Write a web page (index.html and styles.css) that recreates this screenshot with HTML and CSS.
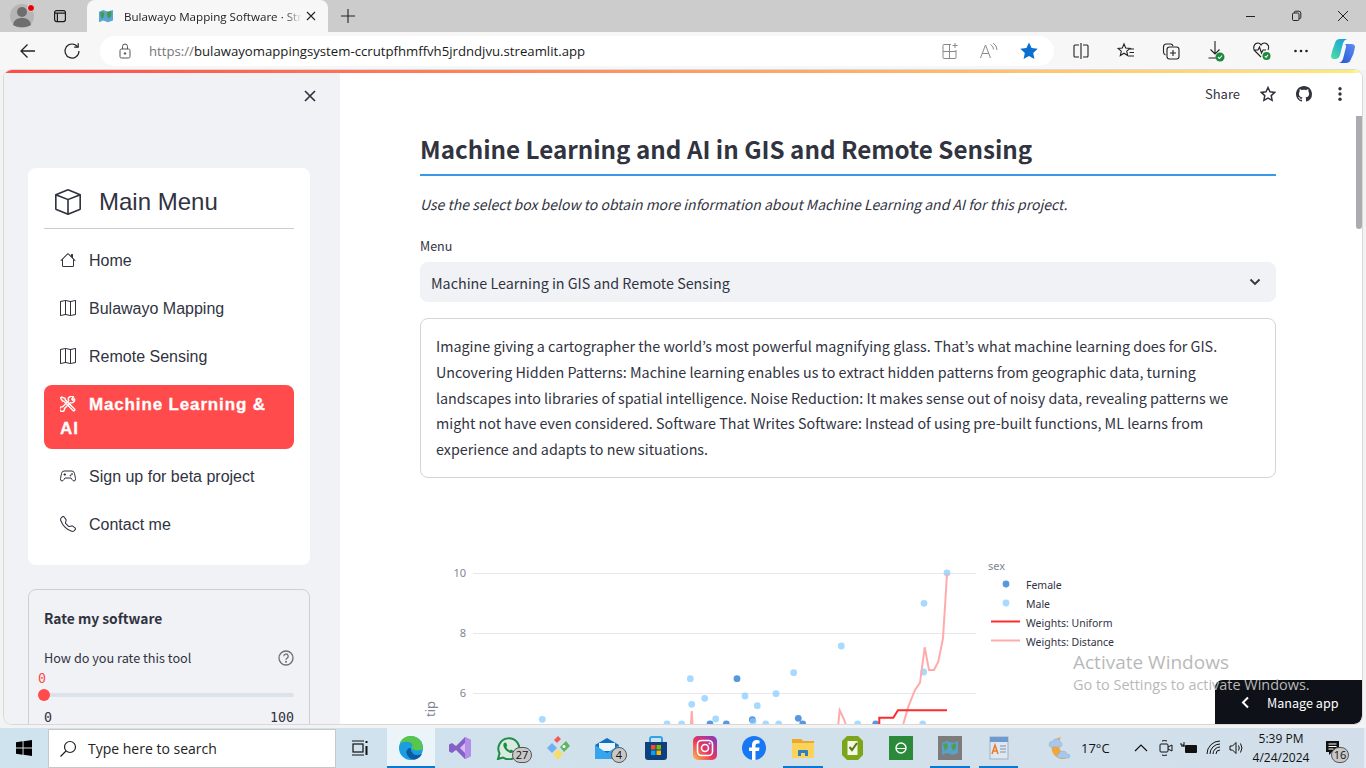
FILE: index.html
```html
<!DOCTYPE html>
<html lang="en">
<head>
<meta charset="utf-8">
<title>Bulawayo Mapping Software</title>
<link rel="stylesheet" href="styles.css">
</head>
<body>
<header class="tabstrip">
  <div class="profile">
    <svg width="30" height="30" viewBox="0 0 30 30"><circle cx="15" cy="15" r="12" fill="#b5b5b5"/><circle cx="15" cy="11" r="5" fill="#6e6e6e"/><path d="M6 24c1-6 5-7 9-7s8 1 9 7c-5 3-13 3-18 0z" fill="#6e6e6e"/><circle cx="24" cy="7" r="3.5" fill="#e00000" stroke="#ddd"/></svg>
  </div>
  <div class="tabctl"><svg width="16" height="16" viewBox="0 0 16 16" fill="none" stroke="#1a1a1a" stroke-width="1.2"><rect x="2.6" y="2.6" width="10.8" height="11" rx="2"/><path d="M2.6 5.2h10.8M5.4 5.2v8.4"/></svg></div>
  <div class="tab">
    <svg class="favicon" width="14" height="14" viewBox="0 0 16 16"><path d="M0 3l5-2 5 2 6-2v12l-6 2-5-2-5 2z" fill="#58a5d6"/><path d="M1.500 4l3-1 1.500 3-1 4-2 1-1-3zM9 3.500l5-1.500v6l-3 3-1.500-3z" fill="#3f9a55"/><path d="M6.500 3.500L9 4.500 8.500 7l-2-1z" fill="#6fae62"/></svg>
    <span class="tabtitle">Bulawayo Mapping Software · Str</span>
    <svg width="12" height="12" viewBox="0 0 12 12" stroke="#222" stroke-width="1.1"><path d="M2 2l8 8M10 2l-8 8"/></svg>
  </div>
  <div class="newtab"><svg width="16" height="16" viewBox="0 0 16 16" stroke="#222" stroke-width="1.1"><path d="M8 1v14M1 8h14"/></svg></div>
  <div class="winctl">
    <span class="wbtn"><svg width="12" height="12" viewBox="0 0 12 12" stroke="#222"><path d="M1 6.5h9"/></svg></span>
    <span class="wbtn"><svg width="12" height="12" viewBox="0 0 12 12" fill="none" stroke="#222"><rect x="1.5" y="3" width="6.5" height="7.5" rx="1.2"/><path d="M3.5 3V2.2q0-1 1-1h3.3q2 0 2 2v4.3q0 1-1 1H8"/></svg></span>
    <span class="wbtn"><svg width="12" height="12" viewBox="0 0 12 12" stroke="#222"><path d="M1 1l10 10M11 1L1 11"/></svg></span>
  </div>
</header>
<nav class="toolbar">
  <span class="tb tb-back"><svg width="18" height="18" viewBox="0 0 18 18" fill="none" stroke="#222" stroke-width="1.3"><path d="M16 9H2M8.500 2.500L2 9l6.500 6.500"/></svg></span>
  <span class="tb tb-reload"><svg width="18" height="18" viewBox="0 0 18 18" fill="none" stroke="#222" stroke-width="1.2"><path d="M14.600 4.800A7 7 0 1 0 16 9"/><path d="M15.200 1.200v4h-4"/></svg></span>
  <div class="address">
    <svg class="lock" width="14" height="16" viewBox="0 0 14 16" fill="none" stroke="#555"><rect x="2" y="6" width="10" height="9" rx="1.5"/><path d="M4.500 6V3.500a2.500 2.500 0 0 1 5 0V6"/><circle cx="7" cy="10.500" r=".8" fill="#555"/></svg>
    <span class="url"><span class="urlscheme">https://</span>bulawayomappingsystem-ccrutpfhmffvh5jrdndjvu.streamlit.app</span>
    <span class="addr-icons">
      <svg width="18" height="18" viewBox="0 0 18 18" fill="none" stroke="#8a8a8a"><path d="M10 2.500H3a1 1 0 0 0-1 1v12a1 1 0 0 0 1 1h11a1 1 0 0 0 1-1V8M2 9.500h13M8.500 3v13M14 1v5M11.500 3.500h5"/></svg>
      <svg width="20" height="18" viewBox="0 0 20 18" fill="none" stroke="#8a8a8a"><path d="M1.500 16L6.500 3l5 13M3.300 11.500h6.400M11.500 2.500q3 1.500 3 5M14 1q4 2.500 4 7"/></svg>
      <svg width="20" height="20" viewBox="0 0 20 20"><path d="M10 1.500l2.600 5.600 6.100.7-4.500 4.200 1.200 6-5.400-3-5.400 3 1.200-6L1.300 7.800l6.100-.7z" fill="#0a6fcf"/></svg>
    </span>
  </div>
  <div class="tb-right">
    <svg width="18" height="18" viewBox="0 0 18 18" fill="none" stroke="#222" stroke-width="1.100"><path d="M9 1v16M7 3H3a1 1 0 0 0-1 1v10a1 1 0 0 0 1 1h4M11 3h4a1 1 0 0 1 1 1v10a1 1 0 0 1-1 1h-4"/></svg>
    <svg width="18" height="18" viewBox="0 0 18 18" fill="none" stroke="#222" stroke-width="1.100"><path d="M7 2l1.700 4 4.300.4-3.300 2.800 1 4.300L7 11.200l-3.700 2.300 1-4.300L1 6.400l4.300-.4zM13 7h4M12.500 10.500h4.500M11.500 14h5.500"/></svg>
    <svg width="18" height="18" viewBox="0 0 18 18" fill="none" stroke="#222" stroke-width="1.100"><rect x="5" y="5" width="12" height="12" rx="2.500"/><path d="M11 8v6M8 11h6M3.500 13Q1.500 12 1.500 10V5q0-3 3-3h4q2 0 2.500 2"/></svg>
    <span class="ext"><svg width="18" height="22" viewBox="0 0 18 22" fill="none" stroke="#222" stroke-width="1.100"><path d="M8 1v13M3.500 9.500L8 14l4.500-4.500M1.500 18H9"/><circle cx="13" cy="17" r="4.500" fill="#1c8a3c" stroke="none"/><path d="M11 17l1.500 1.500 2.500-3" stroke="#fff"/></svg></span>
    <span class="ext"><svg width="20" height="20" viewBox="0 0 20 20" fill="none" stroke="#222" stroke-width="1.100"><path d="M9 16L3 10Q1 8 2 5t4-3q2 0 3 2 1-2 3.500-2t4 3q.5 2-.5 4M1.500 9H6l1.500-3 2 6 1.500-3h3"/><circle cx="14.500" cy="15" r="4" fill="#1c8a3c" stroke="none"/><path d="M12.800 15l1.200 1.300 2-2.500" stroke="#fff"/></svg></span>
    <svg class="dots" width="18" height="18" viewBox="0 0 18 18" fill="#222"><circle cx="3.500" cy="9" r="1.300"/><circle cx="9" cy="9" r="1.300"/><circle cx="14.500" cy="9" r="1.300"/></svg>
    <svg class="copilot" width="24" height="24" viewBox="0 0 24 24"><defs><linearGradient id="cpa" x1="0" y1="1" x2="1" y2="0"><stop offset="0" stop-color="#4fe0a0"/><stop offset="1" stop-color="#0f9be0"/></linearGradient><linearGradient id="cpb" x1="0" y1="1" x2="1" y2="0"><stop offset="0" stop-color="#1f58d8"/><stop offset="1" stop-color="#5f8cf0"/></linearGradient></defs><path d="M9 0h7q-3 1-4 4L9 16q-1 4-5 4H3q-3 0-3-3q1-6 4-13q1-4 5-4z" fill="url(#cpa)"/><path d="M14 5h6q4 0 4 3-1 7-4 12-1 4-5 4H8q3-1 4-4l3-12q.5-2-1-3z" fill="url(#cpb)"/></svg>
  </div>
</nav>
<div class="frame">
  <div class="decoration"></div>
  <div class="app">
    <aside class="sidebar">
      <div class="side-top"><svg width="14" height="14" viewBox="0 0 14 14" stroke="#31333f" stroke-width="1.700"><path d="M2 2l10 10M12 2L2 12"/></svg></div>
      <div class="menucard">
        <div class="menutitle">
          <svg width="26" height="26" viewBox="0 0 16 16" fill="#31333f"><path d="M8.186 1.113a.5.5 0 0 0-.372 0L1.846 3.5 8 5.961 14.154 3.5 8.186 1.113zM15 4.239l-6.500 2.600v7.922l6.500-2.600V4.240zM7.500 14.762V6.838L1 4.239v7.925l6.500 2.600zM7.443.184a1.500 1.500 0 0 1 1.114 0l7.129 2.852A.5.5 0 0 1 16 3.500v8.662a1 1 0 0 1-.629.928l-7.185 2.874a.5.5 0 0 1-.372 0L.63 13.090a1 1 0 0 1-.63-.928V3.500a.5.500 0 0 1 .314-.464L7.443.184z"/></svg>
          <span>Main Menu</span>
        </div>
        <ul class="menulist">
          <li class="menuitem"><svg width="16" height="16" viewBox="0 0 16 16" fill="#31333f"><path d="M8.707 1.500a1 1 0 0 0-1.414 0L.646 8.146a.5.5 0 0 0 .708.708L2 8.207V13.500A1.500 1.500 0 0 0 3.500 15h9a1.500 1.500 0 0 0 1.500-1.500V8.207l.646.647a.5.5 0 0 0 .708-.708L13 5.793V2.500a.5.5 0 0 0-.5-.5h-1a.5.5 0 0 0-.5.500v1.293L8.707 1.500ZM13 7.207V13.500a.5.500 0 0 1-.5.500h-9a.5.500 0 0 1-.5-.5V7.207l5-5 5 5Z"/></svg><span>Home</span></li>
          <li class="menuitem"><svg width="16" height="16" viewBox="0 0 16 16" fill="#31333f"><path d="M15.817.113A.5.5 0 0 1 16 .5v14a.5.5 0 0 1-.402.49l-5 1a.502.502 0 0 1-.196 0L5.500 15.010l-4.902.98A.5.5 0 0 1 0 15.500v-14a.5.500 0 0 1 .402-.49l5-1a.5.500 0 0 1 .196 0L10.500.99l4.902-.98a.5.500 0 0 1 .415.103zM10 1.910l-4-.8v12.980l4 .8V1.910zm1 12.980 4-.8V1.110l-4 .8v12.980zm-6-.8V1.110l-4 .8v12.980l4-.8z"/></svg><span>Bulawayo Mapping</span></li>
          <li class="menuitem"><svg width="16" height="16" viewBox="0 0 16 16" fill="#31333f"><path d="M15.817.113A.5.5 0 0 1 16 .5v14a.5.5 0 0 1-.402.49l-5 1a.502.502 0 0 1-.196 0L5.500 15.010l-4.902.98A.5.5 0 0 1 0 15.500v-14a.5.500 0 0 1 .402-.49l5-1a.5.500 0 0 1 .196 0L10.500.99l4.902-.98a.5.500 0 0 1 .415.103zM10 1.910l-4-.8v12.980l4 .8V1.910zm1 12.980 4-.8V1.110l-4 .8v12.980zm-6-.8V1.110l-4 .8v12.980l4-.8z"/></svg><span>Remote Sensing</span></li>
          <li class="menuitem active"><svg width="16" height="16" viewBox="0 0 16 16" fill="none" stroke="#fff" stroke-width="1.400"><path d="M1.500 1l-1 1 2 3 1.500.3 9 9.200a1 1 0 0 0 1.500-1.500L5.300 3.800 5 2.300z"/><path d="M13.500 1.200L11.800 3l.9 1.200L14.500 3a3 3 0 0 1-4 3.600L4.500 12.500a2.400 2.400 0 1 1-1.800-1.800l6-6a3 3 0 0 1 4.800-3.500z"/></svg><span>Machine Learning &amp; AI</span></li>
          <li class="menuitem"><svg width="16" height="16" viewBox="0 0 16 16" fill="none" stroke="#31333f"><path d="M4 3h8q2 0 2.500 2.500l1 5q.3 2.500-1.500 2.500-1 0-2-1.500L11 10H5l-1 1.500Q3 13 2 13 .2 13 .5 10.500l1-5Q2 3 4 3z"/><path d="M3.500 6.500h2.500M4.800 5.300v2.500"/><circle cx="10.500" cy="7.500" r=".5"/><circle cx="12" cy="6" r=".5"/></svg><span>Sign up for beta project</span></li>
          <li class="menuitem"><svg width="16" height="16" viewBox="0 0 16 16" fill="#31333f"><path d="M3.654 1.328a.678.678 0 0 0-1.015-.063L1.605 2.300c-.483.484-.661 1.169-.45 1.770a17.568 17.568 0 0 0 4.168 6.608 17.569 17.569 0 0 0 6.608 4.168c.601.211 1.286.033 1.770-.45l1.034-1.034a.678.678 0 0 0-.063-1.015l-2.307-1.794a.678.678 0 0 0-.58-.122l-2.190.547a1.745 1.745 0 0 1-1.657-.459L5.482 8.062a1.745 1.745 0 0 1-.46-1.657l.548-2.190a.678.678 0 0 0-.122-.58L3.654 1.328zM1.884.511a1.745 1.745 0 0 1 2.612.163L6.290 2.980c.329.423.445.974.315 1.494l-.547 2.190a.678.678 0 0 0 .178.643l2.457 2.457a.678.678 0 0 0 .644.178l2.189-.547a1.745 1.745 0 0 1 1.494.315l2.306 1.794c.829.645.905 1.870.163 2.611l-1.034 1.034c-.74.74-1.846 1.065-2.877.702a18.634 18.634 0 0 1-7.010-4.420 18.634 18.634 0 0 1-4.420-7.009c-.362-1.030-.037-2.137.703-2.877L1.885.511z"/></svg><span>Contact me</span></li>
        </ul>
      </div>
      <section class="ratepanel">
        <h3 class="ratetitle">Rate my software</h3>
        <div class="ratelabel"><span>How do you rate this tool</span><svg width="16" height="16" viewBox="0 0 16 16" fill="none" stroke="#6d6f78" stroke-width="1.300"><circle cx="8" cy="8" r="7"/><path d="M5.800 6.200a2.200 2.200 0 1 1 3.300 1.900Q8 8.700 8 9.800"/><circle cx="8" cy="11.800" r=".4"/></svg></div>
        <div class="sliderval">0</div>
        <div class="track"><span class="thumb"></span></div>
        <div class="sliderends"><span>0</span><span>100</span></div>
      </section>
    </aside>
    <main class="main">
      <div class="mainhead">
        <span class="share">Share</span>
        <svg width="16" height="16" viewBox="0 0 16 16" fill="none" stroke="#31333f" stroke-width="1.500"><path d="M8 1.500l2 4.300 4.700.6-3.500 3.200.9 4.700L8 12l-4.100 2.300.9-4.700L1.300 6.400 6 5.800z"/></svg>
        <svg width="16" height="16" viewBox="0 0 16 16" fill="#31333f"><path d="M8 0C3.580 0 0 3.580 0 8c0 3.540 2.290 6.530 5.470 7.590.4.070.55-.17.55-.38 0-.19-.01-.82-.01-1.490-2.010.37-2.530-.49-2.690-.94-.09-.23-.48-.94-.82-1.130-.28-.15-.68-.52-.01-.53.63-.01 1.080.58 1.230.82.72 1.210 1.870.87 2.330.66.07-.52.28-.87.51-1.070-1.780-.2-3.640-.89-3.640-3.950 0-.87.31-1.590.82-2.150-.08-.2-.36-1.020.08-2.120 0 0 .67-.21 2.200.82.64-.18 1.320-.27 2-.27.68 0 1.360.09 2 .27 1.530-1.040 2.200-.82 2.200-.82.44 1.100.16 1.920.08 2.120.51.56.82 1.270.82 2.150 0 3.070-1.870 3.750-3.650 3.950.29.25.54.73.54 1.480 0 1.070-.01 1.930-.01 2.200 0 .21.15.46.55.38A8.013 8.013 0 0 0 16 8c0-4.420-3.580-8-8-8z"/></svg>
        <svg width="16" height="16" viewBox="0 0 16 16" fill="#31333f"><circle cx="8" cy="2.800" r="1.700"/><circle cx="8" cy="8" r="1.700"/><circle cx="8" cy="13.200" r="1.700"/></svg>
      </div>
      <div class="content">
        <h1 class="pagetitle">Machine Learning and AI in GIS and Remote Sensing</h1>
        <p class="lead">Use the select box below to obtain more information about Machine Learning and AI for this project.</p>
        <label class="fieldlabel">Menu</label>
        <div class="select"><span>Machine Learning in GIS and Remote Sensing</span><svg width="12" height="8" viewBox="0 0 12 8" fill="none" stroke="#31333f" stroke-width="1.800"><path d="M1.500 1.500L6 6l4.500-4.500"/></svg></div>
        <div class="textbox">Imagine giving a cartographer the world’s most powerful magnifying glass. That’s what machine learning does for GIS. Uncovering Hidden Patterns: Machine learning enables us to extract hidden patterns from geographic data, turning landscapes into libraries of spatial intelligence. Noise Reduction: It makes sense out of noisy data, revealing patterns we might not have even considered. Software That Writes Software: Instead of using pre-built functions, ML learns from experience and adapts to new situations.</div>
        <svg class="chart" width="700" height="174" viewBox="420 550 700 174">
          <g stroke="#e6e8ee" stroke-width="1"><path d="M473 573.500H976M473 633.500H976M473 693.500H976"/></g>
          <g class="ticks"><text x="466" y="577">10</text><text x="466" y="637">8</text><text x="466" y="697">6</text></g>
          <text class="axis" transform="translate(435 717) rotate(-90)">tip</text>
          <g fill="#1f77d0" fill-opacity=".75">
            <circle cx="710" cy="724" r="3.400"/><circle cx="726.300" cy="724" r="3.400"/><circle cx="737" cy="678.700" r="3.400"/><circle cx="752.300" cy="719.700" r="3.400"/><circle cx="798.300" cy="718.300" r="3.400"/><circle cx="802.700" cy="724" r="3.400"/><circle cx="875.700" cy="724" r="3.400"/>
          </g>
          <g fill="#83c9ff" fill-opacity=".7">
            <circle cx="542.300" cy="719.300" r="3.400"/><circle cx="667" cy="724" r="3.400"/><circle cx="681.700" cy="724" r="3.400"/><circle cx="690.300" cy="678.700" r="3.400"/><circle cx="691.700" cy="704.300" r="3.400"/><circle cx="704.700" cy="698.300" r="3.400"/><circle cx="715.700" cy="719" r="3.400"/><circle cx="745" cy="696" r="3.400"/><circle cx="757.300" cy="705.700" r="3.400"/><circle cx="776" cy="693.700" r="3.400"/><circle cx="793.700" cy="672.700" r="3.400"/><circle cx="841.300" cy="646" r="3.400"/><circle cx="924" cy="603.300" r="3.400"/><circle cx="947" cy="573" r="3.400"/><circle cx="923.700" cy="672" r="3.400"/><circle cx="753" cy="721.300" r="3.400"/><circle cx="765.700" cy="724" r="3.400"/><circle cx="778.700" cy="724" r="3.400"/><circle cx="857.700" cy="724" r="3.400"/><circle cx="922.700" cy="724" r="3.400"/>
          </g>
          <g fill="none" stroke="#ffabab" stroke-width="2">
            <path d="M691 724L691.700 711L692.500 724"/>
            <path d="M838.300 724L839.700 710.300L843.300 717.700L845.700 724"/>
            <path d="M903.300 724L908.300 706.700L915 690L920 682.700L924.700 647.300L929 670L934 670L938.300 661.700L943 638.300L947 574"/>
          </g>
          <path d="M879.300 724V717.700H893.300L898 710.300H947" fill="none" stroke="#ff2b2b" stroke-width="2"/>
          <text class="legendtitle" x="988" y="570">sex</text>
          <circle cx="1006" cy="584" r="3.400" fill="#1f77d0" fill-opacity=".75"/><text class="legend" x="1026" y="589">Female</text>
          <circle cx="1006" cy="603" r="3.400" fill="#83c9ff" fill-opacity=".7"/><text class="legend" x="1026" y="608">Male</text>
          <path d="M991 621.500h29" stroke="#ff2b2b" stroke-width="2"/><text class="legend" x="1026" y="627">Weights: Uniform</text>
          <path d="M991 640.500h29" stroke="#ffabab" stroke-width="2"/><text class="legend" x="1026" y="646">Weights: Distance</text>
        </svg>
      </div>
      <div class="scrollthumb"></div>
      <div class="manage"><svg width="9" height="13" viewBox="0 0 9 13" fill="none" stroke="#fff" stroke-width="2"><path d="M7 1.500L2 6.500l5 5"/></svg><span>Manage app</span></div>
      <div class="activate"><div class="act1">Activate Windows</div><div class="act2">Go to Settings to activate Windows.</div></div>
    </main>
  </div>
</div>
<footer class="taskbar">
  <span class="startbtn"><svg width="16" height="16" viewBox="0 0 17 17" fill="#000"><path d="M0 2.400l7-1v6.600H0zM8 1.300L17 0v8H8zM0 9h7v6.600l-7-1zM8 9h9v8l-9-1.300z"/></svg></span>
  <div class="search"><svg width="18" height="18" viewBox="0 0 18 18" fill="none" stroke="#222" stroke-width="1.200"><circle cx="11" cy="7" r="5.500"/><path d="M7 11l-5.500 5.500"/></svg><span>Type here to search</span></div>
  <span class="tk w-task"><svg width="18" height="18" viewBox="0 0 18 18" fill="none" stroke="#111" stroke-width="1.200"><rect x="2" y="5" width="10" height="8"/><path d="M1 2h12M1 16h12"/><path d="M15.500 2v2M15.500 7v9" stroke-width="2"/></svg></span>
  <span class="tk w-edge"><svg width="24" height="24" viewBox="0 0 24 24"><circle cx="12" cy="12" r="12" fill="#1b9de2"/><path d="M24 13C24 5 18 0 12 0 6 0 2 3 1 8c3-3 10-3 12 0 1 2 0 3-1 4 3 3 9 3 12 1z" fill="#56c74a"/><path d="M12 12c-3 0-5 2-4.500 5 .5 3 4 7 8.500 6.500 3-.5 6-3 7-6-3 2-7 2-9 0-1.500-1.500-2.500-3-2-5.500z" fill="#0c59a4"/></svg></span>
  <span class="tk w-vs"><svg width="24" height="24" viewBox="0 0 24 24"><path d="M17 1l6 3v16l-6 3-9-9-4 3-3-1.500V8.500L4 7l4 3z" fill="#8661c5"/><path d="M17 7l-5 5 5 5z" fill="#c4a8ee"/><path d="M17 1l6 3v16l-6 3z" fill="#b48ee8"/><path d="M17 7v10l-5-5z" fill="#fff" fill-opacity=".25"/></svg></span>
  <span class="tk w-wa"><svg width="24" height="24" viewBox="0 0 24 24" fill="none"><path d="M2 23l1.500-5.500A10.500 10.500 0 1 1 7 21.500z" stroke="#1e8a44" stroke-width="2" fill="#d6ece0"/><path d="M8 7q-1.500 2 .5 5.500t6.500 4.500q2 0 2.500-2l-2.500-1.500-1.200 1q-2.500-1-3.500-3.500l1-1.200L10 6.500z" fill="#1e8a44"/></svg><b class="badge badge-wide">27</b></span>
  <span class="tk w-git"><svg width="24" height="24" viewBox="0 0 24 24"><path d="M1 12l5-5 5 5-5 5z" fill="#6fb0f5"/><path d="M8 4l4-4 3 3-4 4z" fill="#ef5a5a"/><path d="M14 11l6-6 4 5-6 6z" fill="#5fb65f"/><path d="M7 18l5-5 5 5-5 6z" fill="#f5dd6a"/><circle cx="18" cy="10.500" r="1.500" fill="#fff"/></svg></span>
  <span class="tk w-mail"><svg width="24" height="22" viewBox="0 0 24 22"><path d="M0 8l12-7 12 7v14H0z" fill="#0f6fc0"/><path d="M4 6h16v8H4z" fill="#eaf5fd"/><path d="M0 8l12 8 12-8v14H0z" fill="#37a5ee"/></svg><b class="badge">4</b></span>
  <span class="tk w-store"><svg width="24" height="24" viewBox="0 0 24 24"><path d="M1 6h22v15q0 3-3 3H4q-3 0-3-3z" fill="#0e3f7e"/><path d="M6 6V3q0-2 2-2h8q2 0 2 2v3" fill="none" stroke="#2ea3e8" stroke-width="2"/><rect x="7" y="9" width="4.500" height="4.500" fill="#f25022"/><rect x="12.500" y="9" width="4.500" height="4.500" fill="#7fba00"/><rect x="7" y="14.500" width="4.500" height="4.500" fill="#00a4ef"/><rect x="12.500" y="14.500" width="4.500" height="4.500" fill="#ffb900"/></svg></span>
  <span class="tk w-ig"><svg width="24" height="24" viewBox="0 0 24 24"><defs><linearGradient id="ig" x1="0" y1="1" x2="1" y2="0"><stop offset="0" stop-color="#fdc04f"/><stop offset=".45" stop-color="#e8365d"/><stop offset="1" stop-color="#7f3ac7"/></linearGradient></defs><rect width="24" height="24" rx="5" fill="url(#ig)"/><rect x="4.500" y="4.500" width="15" height="15" rx="4" fill="none" stroke="#fff" stroke-width="1.600"/><circle cx="12" cy="12" r="3.500" fill="none" stroke="#fff" stroke-width="1.600"/><circle cx="16.500" cy="7.500" r="1" fill="#fff"/></svg></span>
  <span class="tk w-fb"><svg width="24" height="24" viewBox="0 0 24 24"><circle cx="12" cy="12" r="12" fill="#1877f2"/><path d="M13.500 24v-9H17l.5-3.500h-4V9.500q0-2 2-2h2V4.500Q16 4 15 4q-5 0-5 5v2.500H7V15h3v9z" fill="#fff"/></svg></span>
  <span class="tk w-files"><svg width="22" height="20" viewBox="0 0 22 20"><path d="M0 1h9l2 2h11v16H0z" fill="#e8a92c"/><path d="M0 5h22v15H0z" fill="#fbd35a"/><path d="M6 18v-5q0-1 1-1h8q1 0 1 1v5h-3v-3H9v3z" fill="#2f7fc4"/></svg></span>
  <span class="tk w-note"><svg width="21" height="24" viewBox="0 0 21 24"><path d="M5 0h11l5 5v14l-5 5H5l-5-5V5z" fill="#7ca51a"/><rect x="5.500" y="5" width="10" height="14" fill="#f3f7e6"/><path d="M7.500 11l2.500 3 5-7" fill="none" stroke="#58790f" stroke-width="2"/></svg></span>
  <span class="tk w-green"><svg width="24" height="24" viewBox="0 0 24 24"><rect width="24" height="24" fill="#2a8a3a"/><circle cx="12" cy="12" r="5" fill="none" stroke="#fff" stroke-width="1.400"/><path d="M7 12.500h10" stroke="#fff"/></svg></span>
  <span class="tk w-map"><svg width="24" height="24" viewBox="0 0 24 24"><rect width="24" height="24" fill="#7c7c7c"/><path d="M4 7l5-2 6 2 5-2v12l-5 2-6-2-5 2z" fill="#5aa0c8"/><path d="M5 8l4-1 1 4-3 4zM13 9l5-2v5l-3 3z" fill="#4f9e52"/></svg></span>
  <span class="tk w-word"><svg width="20" height="24" viewBox="0 0 20 24"><rect x="1" y="1" width="18" height="22" fill="#dfe8f2" stroke="#9fb0c2"/><rect x="1" y="1" width="18" height="5" fill="#6d9bd0"/><path d="M3 18l3-9 3 9M4 15h4" fill="none" stroke="#e8792b" stroke-width="1.500"/><path d="M11 10h6M11 13h6M11 16h6" stroke="#7d92a8"/></svg></span>
  <span class="tk w-weather"><svg width="28" height="28" viewBox="0 0 28 28"><path d="M15 3a11 11 0 1 0 9 19A12 12 0 0 1 15 3z" fill="#f1a63b"/><path d="M3 11q0-4 4-4 1-3 4-2 3 0 3 3 2 0 2 2.500T13 13H5q-2 0-2-2zM13 24q-2 0-2-2t2-2q0-3 4-3 3 0 4 3 3 0 3 2t-2 2z" fill="#a9c7e8" stroke="#8aacd3" stroke-width=".5"/></svg></span>
  <span class="temp">17°C</span>
  <span class="tk w-chev"><svg width="14" height="10" viewBox="0 0 14 10" fill="none" stroke="#111" stroke-width="1.200"><path d="M1 8l6-6 6 6"/></svg></span>
  <span class="tk w-cam"><svg width="16" height="18" viewBox="0 0 16 18" fill="none" stroke="#111"><rect x="2" y="5" width="8" height="8" rx="1"/><path d="M10 8l4-2v6l-4-2M4 2q2-1 5 0M4 16q2 1 5 0"/></svg></span>
  <span class="tk w-bat"><svg width="18" height="14" viewBox="0 0 18 14" fill="#111"><rect x="5" y="4" width="12" height="8" rx="1"/><path d="M1 2v2h3v1H1M4 1v5" stroke="#111" fill="none"/></svg></span>
  <span class="tk w-wifi"><svg width="16" height="16" viewBox="0 0 16 16" fill="none" stroke="#111"><path d="M1 14A13 13 0 0 1 14 1M4 14A10 10 0 0 1 14 4M7 14a7 7 0 0 1 7-7M10 14a4 4 0 0 1 4-4"/></svg></span>
  <span class="tk w-vol"><svg width="16" height="16" viewBox="0 0 16 16" fill="none" stroke="#111"><path d="M1 6h2.500L7 2.500v11L3.500 10H1zM9.500 5.500q1.500 2.500 0 5M11.500 3.500q3 4.500 0 9"/></svg></span>
  <div class="clock"><span>5:39 PM</span><span>4/24/2024</span></div>
  <span class="tk w-notif"><svg width="16" height="16" viewBox="0 0 16 16" fill="#111"><path d="M1 1h13v11H7l-3 3v-3H1z"/><path d="M3.500 4h8M3.500 6.500h8M3.500 9h5" stroke="#fff"/></svg><b class="badge badge-mid">16</b></span>
</footer>
</body>
</html>
```
FILE: styles.css
```css
* { box-sizing: border-box; }
html, body { margin: 0; padding: 0; }
body {
  width: 1366px; height: 768px; overflow: hidden;
  display: flex; flex-direction: column;
  font-family: "Noto Sans", sans-serif;
  background: #f3f3f3; color: #31333f;
}
svg { display: block; flex: none; }

/* browser chrome */
.tabstrip { height: 32px; flex: none; background: #cccccc; display: flex; align-items: flex-end; }
.profile { width: 30px; height: 32px; margin-left: 7px; display: flex; align-items: center; }
.tabctl { width: 16px; height: 32px; margin-left: 15px; display: flex; align-items: center; }
.tab {
  width: 241px; height: 32px; margin-left: 19px; padding: 0 12px;
  background: #f7f7f7; border-radius: 8px 8px 0 0;
  display: flex; align-items: center; gap: 11px;
  font: 11.600px "Open Sans", sans-serif; color: #222;
}
.tabtitle { flex: 1; white-space: nowrap; -webkit-mask-image: linear-gradient(to right, #000 90%, transparent); mask-image: linear-gradient(to right, #000 90%, transparent); }
.tab svg:last-child { margin-left: -8px; }
.newtab { height: 32px; margin-left: 12px; display: flex; align-items: center; }
.winctl { margin-left: auto; height: 32px; display: flex; align-items: center; }
.wbtn { width: 46px; display: flex; justify-content: center; }

.toolbar { height: 38px; flex: none; background: #f7f7f7; display: flex; align-items: center; }
.tb { display: flex; }
.tb-back { margin-left: 19px; }
.tb-reload { margin-left: 26px; }
.address {
  width: 954px; height: 30px; margin-left: 19px; padding: 0 15px 0 18px;
  background: #fff; border-radius: 15px;
  display: flex; align-items: center;
}
.url { margin-left: 17px; font: 13.180px "Open Sans", sans-serif; color: #1a1a1a; white-space: nowrap; }
.urlscheme { color: #767676; }
.addr-icons { margin-left: auto; display: flex; align-items: center; gap: 20px; }
.tb-right { margin-left: 18px; display: flex; align-items: center; gap: 27px; }
.ext { display: flex; }
.dots { margin-left: -7px; }
.copilot { margin-left: -6px; }

.frame { height: 654px; flex: none; margin: 0 4px; display: flex; flex-direction: column; border-radius: 8px; overflow: hidden; background: #fff; box-shadow: 0 0 0 1px #d9d9d9; }
.decoration { height: 3px; flex: none; background: linear-gradient(to right, #ff4b4b, #ffe97a 99%, #fdfd96); }
.app { flex: 1; min-height: 0; display: flex; }

/* sidebar */
.sidebar { width: 336px; flex: none; background: #f0f2f6; padding: 0 30px 0 24px; overflow: hidden; }
.side-top { height: 95px; padding-top: 16px; display: flex; justify-content: flex-end; margin-right: -7px; }
.menucard { width: 282px; height: 397px; background: #fff; border-radius: 8px; padding: 16px; font-family: "Liberation Sans", Arial, sans-serif; }
.menutitle { height: 44px; padding: 0 0 8px 11px; display: flex; align-items: center; gap: 18px; font-size: 24px; color: #31333f; }
.menulist { list-style: none; margin: 0; padding: 12px 0 0; border-top: 1px solid #c9ccd2; display: flex; flex-direction: column; gap: 8px; }
.menuitem { min-height: 40px; padding: 8px 16px; border-radius: 8px; font-size: 16px; line-height: 24px; color: #31333f; }
.menuitem svg { display: inline-block; vertical-align: -2px; margin-right: 13px; }
.menuitem.active { background: #ff4b4b; color: #fff; font-size: 17px; font-weight: 700; letter-spacing: .85px; -webkit-text-stroke: .3px #fff; }

.ratepanel { width: 282px; height: 200px; margin-top: 24px; border: 1px solid #cdcfd5; border-radius: 8px; padding: 16px 15px; font-family: "Noto Sans CJK KR", "Noto Sans", sans-serif; }
.ratetitle { margin: 0; font-size: 13.800px; line-height: 24px; font-weight: 700; color: #31333f; }
.ratelabel { margin-top: 16px; display: flex; align-items: center; justify-content: space-between; font-size: 12.700px; line-height: 24px; color: #31333f; }
.sliderval { margin: 1px 0 0 -6px; font: 13.300px/16px "DejaVu Sans Mono", monospace; color: #ff4b4b; height: 16px; }
.track { height: 4px; margin-top: 6px; background: #dde2ea; border-radius: 2px; position: relative; }
.thumb { position: absolute; left: -6px; top: -4px; width: 12px; height: 12px; border-radius: 50%; background: #ff4b4b; }
.sliderends { margin-top: 12px; display: flex; justify-content: space-between; font: 13.300px/18px "DejaVu Sans Mono", monospace; color: #31333f; }

/* main */
.main { flex: 1; min-width: 0; background: #fff; position: relative; overflow: hidden; }
.mainhead { height: 42px; display: flex; align-items: center; justify-content: flex-end; gap: 20px; padding-right: 14px; }
.share { font: 13px/18px "Noto Sans CJK KR", sans-serif; padding-bottom: 1px; }
.content { padding: 16px 86px 0 80px; font-family: "Noto Sans CJK KR", "Noto Sans", sans-serif; }
.pagetitle { margin: 0; font-size: 24.200px; font-weight: 700; line-height: 36px; padding-bottom: 7px; border-bottom: 2px solid #3d97e8; color: #31333f; }
.lead { margin: 16px 0 0; font-style: italic; font-size: 14px; line-height: 25px; }
.fieldlabel { display: block; margin-top: 19px; font-size: 12.500px; line-height: 20px; }
.select { margin-top: 6px; height: 40px; padding: 0 15px 0 11px; background: #f0f2f6; border-radius: 8px; display: flex; align-items: center; justify-content: space-between; font-size: 14.300px; }
.textbox { margin-top: 16px; height: 160px; padding: 14px 15px; border: 1px solid #d3d5da; border-radius: 8px; font-size: 14.320px; line-height: 25.800px; }
.chart { margin: 72px 0 0 0; }
.ticks text { font: 11px "Noto Sans", sans-serif; fill: #7f8597; text-anchor: end; }
.axis { font: 13px "Noto Sans", sans-serif; fill: #7f8597; }
.legendtitle { font: 11px "Noto Sans", sans-serif; fill: #7f8597; }
.legend { font: 10.500px "Noto Sans", sans-serif; fill: #31333f; }
.scrollthumb { position: absolute; right: 0; top: 43px; width: 6px; height: 113px; border-radius: 0 0 3px 3px; background: #acacb0; }
.manage { position: absolute; right: 0; bottom: 0; width: 147px; height: 44px; background: #0e1117; border-radius: 8px 0 8px 0; display: flex; align-items: center; padding-left: 26px; gap: 17px; color: #fff; font: 12.600px "Noto Sans CJK KR", sans-serif; }
.activate { position: absolute; left: 733px; top: 576px; color: #b9b9b9; font-family: "Open Sans", sans-serif; pointer-events: none; }
.act1 { font-size: 19px; line-height: 26px; }
.act2 { font-size: 14.450px; line-height: 20px; }

/* taskbar */
.taskbar { height: 40px; flex: none; margin-top: 4px; background: linear-gradient(to right, #cfe3ee, #d2dfea); display: flex; align-items: center; font-family: "Open Sans", sans-serif; color: #111; border-right: 2px solid #e4ebf2; }
.startbtn { width: 48px; padding-left: 16px; flex: none; }
.search { width: 288px; height: 39px; margin-top: 1px; background: #fff; border: 1px solid #c8c8c8; display: flex; align-items: center; gap: 11px; padding-left: 10px; font-size: 14px; color: #222; }
.tk { flex: none; height: 40px; display: flex; align-items: center; justify-content: center; position: relative; }
.badge { position: absolute; right: -8px; bottom: 5px; width: 16px; height: 16px; border-radius: 8px; background: #c8c8c8; border: 1px solid #555; font: 400 11px/14px "Open Sans", sans-serif; color: #111; text-align: center; }
.badge-wide { right: -12px; width: 20px; }
.badge-mid { width: 18px; }
.w-task { width: 48px; }
.w-edge { width: 48px; margin-left: 3px; background: #ebf4f8; box-shadow: inset 0 -2px #0b78d4; }
.w-vs { width: 24px; margin-left: 13px; }
.w-wa { width: 24px; margin-left: 24px; }
.w-git { width: 24px; margin-left: 26px; }
.w-mail { width: 24px; margin-left: 25px; }
.w-store { width: 24px; margin-left: 25px; }
.w-ig { width: 24px; margin-left: 25px; }
.w-fb { width: 24px; margin-left: 25px; }
.w-files { width: 40px; margin-left: 17px; box-shadow: inset 0 -2px #0b78d4; }
.w-note { width: 24px; margin-left: 17px; }
.w-green { width: 24px; margin-left: 25px; }
.w-map { width: 40px; margin-left: 17px; box-shadow: inset 0 -2px #0b78d4; }
.w-word { width: 39px; margin-left: 9px; box-shadow: inset 0 -2px #0b78d4; }
.w-weather { width: 30px; margin-left: 27px; }
.temp { margin-left: 6px; font-size: 13px; width: 36px; }
.w-chev { width: 16px; margin-left: 16px; }
.w-cam { width: 16px; margin-left: 9px; }
.w-bat { width: 18px; margin-left: 6px; }
.w-wifi { width: 16px; margin-left: 8px; }
.w-vol { width: 16px; margin-left: 7px; }
.clock { width: 64px; margin-left: 4px; display: flex; flex-direction: column; align-items: center; font-size: 12px; line-height: 19px; }
.w-notif { width: 16px; margin-left: 12px; }
```
